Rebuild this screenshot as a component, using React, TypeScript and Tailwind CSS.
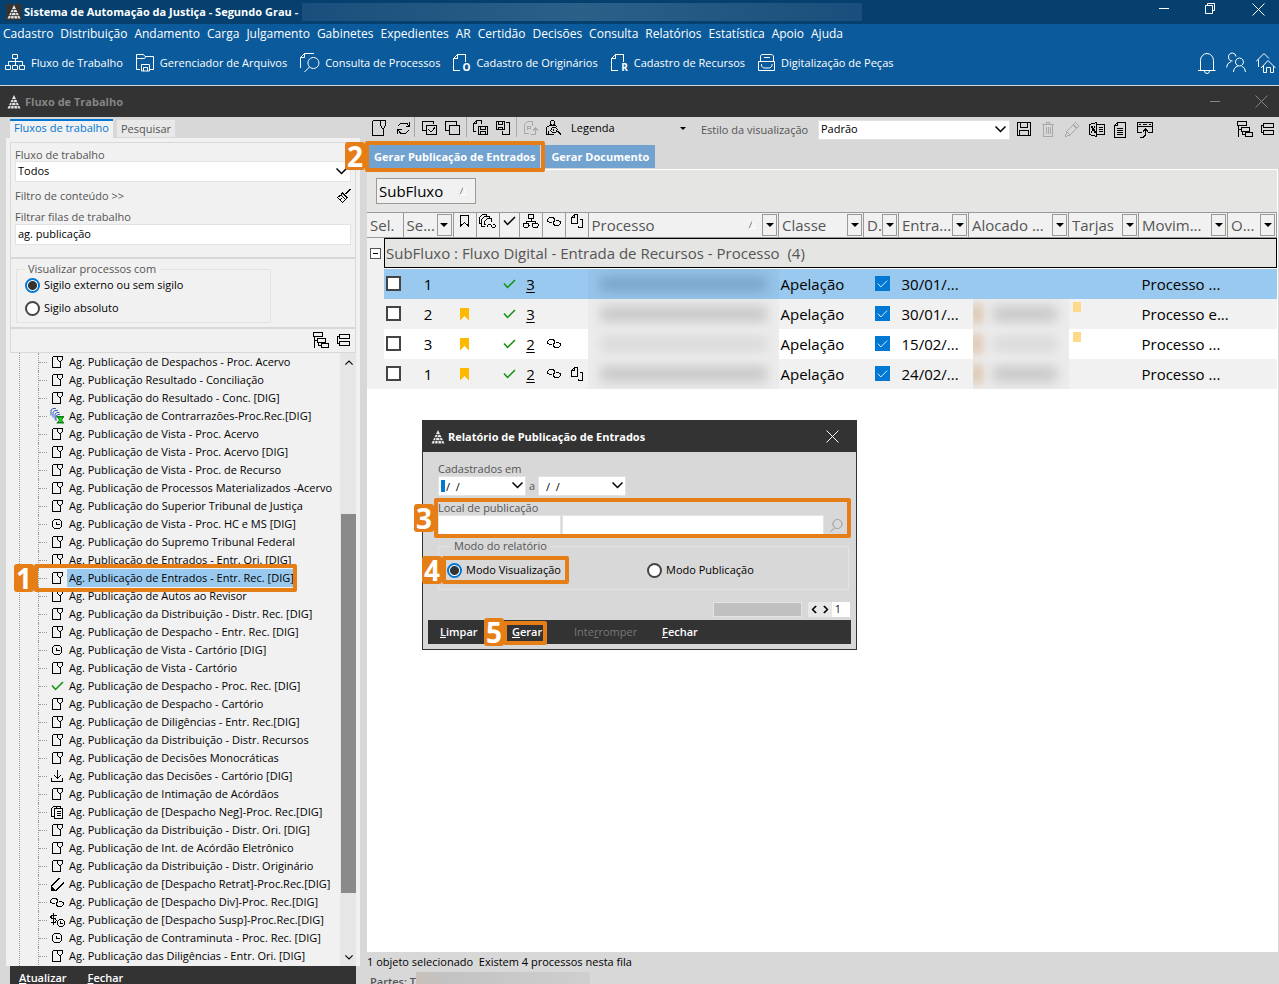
import { useState, type ReactNode } from 'react'
import clsx from 'clsx'

const ICONS = {
  file: { w: 11, h: 12, d: 'M.5.5H10.5V3.5L8.5 5.5V11.5H.5V.5M5.5.5V3.5L7.5 5.5 8.5 5.5' },
  fileLg: { w: 14, h: 16, d: 'M.5.5H13.5V5.5L11.5 8.5V15.5H.5V.5M8.5.5V5.5L10.5 8.5H11.5' },
  clock: { w: 12, h: 12, d: 'M3.5 1.5H8.5L10.5 3.5V8.5L8.5 10.5H3.5L1.5 8.5V3.5ZM5.5 3.5V6.5H8.5' },
  check: { w: 13, h: 10, d: 'M1 4.5L4.5 8.5 12 1' },
  download: { w: 12, h: 12, d: 'M6.5 0V7.5M3 5L6.5 8.5 10 5M.5 7.5V11.5H11.5V7.5' },
  notes: { w: 12, h: 14, d: 'M3.5 3.5H11.5V13.5H3.5ZM5.5 6.5H9.5M5.5 8.5H9.5M5.5 10.5H9.5M5.5 3V1.5H9.5V3M3 11.5H.5V3.5L2.5 1.5H5' },
  pencil: { w: 15, h: 15, d: 'M9.5 1L1.5 9V13.5H6L14 5.5M1.5 10L5 13.5M2 11V13H4Z' },
  link: { w: 14, h: 9, d: 'M5 5.5H2.5L.5 4V2.5L2.5.5H6L7.5 2V3.5L6 4.5M9 3.5H11.5L13.5 5V6.5L11.5 8.5H8L6.5 7V5.5L8 4' },
  dollar: { w: 15, h: 15, d: 'M6.5 2.5H2L.5 4 2 5.5H5L6.5 7.5 5 9.5H.5M3.5 0V12M9.5 6.5H12.5L14.5 8.5V11.5L12.5 13.5H9.5L7.5 11.5V8.5ZM10.5 8V10.5H13' },
  pages: { w: 12, h: 14, d: 'M3.5 0.5H6.5V9.5H.5V3.5ZM3.5.5V3.5H.5M8.5 5.5H11.5V13.5H7.5V11.5' },
  bookmark: { w: 9, h: 12, d: 'M.5.5H8.5V11L4.5 7.5.5 11Z' },
  refresh: { w: 13, h: 14, d: 'M12.5 1V5.5H8.5M12 5L9.5 2H4L1 5M.5 13V8.5H4.5M1 9L3.5 12H9L12 9' },
  checks: { w: 15, h: 15, d: 'M3.5 9.5H.5V.5H11.5V3M4.5 4.5H14.5V13.5H4.5ZM6.5 8.5L9 11 13 6.5' },
  copies: { w: 15, h: 15, d: 'M3.5 9.5H.5V.5H11.5V3.5M4.5 4.5H14.5V13.5H4.5Z' },
  fileSave: { w: 15, h: 16, d: 'M3 11.5H.5V3.5L3.5.5H8.5V4M3.5.5V3.5H.5M5.5 6.5H14.5V14.5H5.5ZM7.5 6.5V9.5H12.5V6.5M7.5 14.5V11.5H12.5V14.5' },
  saveFile: { w: 15, h: 15, d: 'M.5.5H8.5V8.5H.5ZM2.5.5V3.5H6.5V.5M2.5 8.5V6.5H6.5V8.5M10 1.5H13.5V13.5H6.5V10' },
  exportPdf: { w: 14, h: 15, d: 'M5 12.5H.5V3.5L3.5.5H8.5V5M3.5 9V5.5H6V7.5H4M11.5 13V7M9 9.5L11.5 7 14 9.5M7 13.5H11.5' },
  inspect: { w: 16, h: 16, d: 'M2 14.5H.5V7.5L3.5 5.5H5M8 5.5H9.5L11 7M5.5.5H7.5L8.5 1.5V3.5L7.5 5.5H5.5L4.5 3.5V1.5ZM2.5 11V14.5H8M6.5 7.5H9.5L11.5 9.5 9.5 12.5H6.5L4.5 10.5ZM11 11L15 15M12 11L15.5 14.5M7.5 9V11' },
  disk: { w: 15, h: 15, d: 'M.5.5H13.5V13.5H.5ZM3.5.5V5.5H10.5V.5M2.5 13.5V8.5H11.5V13.5' },
  trash: { w: 13, h: 15, d: 'M0 2.5H12M4.5 2V.5H7.5V2M1.5 3V14.5H10.5V3M4.5 5V12M6.5 5V12M8.5 5V12' },
  pencilThin: { w: 15, h: 15, d: 'M1.5 9.5L10.5.5 14 4 5 13 .5 14.5ZM8.5 3L12 6.5M1.5 9.5L5 13' },
  excel: { w: 16, h: 15, d: 'M7.5.5L.5 2.5V12.5L7.5 14.5ZM7.5 2.5H15.5V12.5H7.5M2 4.5L6 10.5M6 4.5L2 10.5M3 4.5L7 10.5M10 5.5H14M10 7.5H14M10 9.5H14' },
  text: { w: 13, h: 16, d: 'M3.5.5H11.5V15.5H.5V3.5ZM3.5.5V3.5H.5M3 6.5H9M3 8.5H9M3 10.5H9M3 12.5H9' },
  window: { w: 16, h: 16, d: 'M5 10.5H.5V.5H15.5V10.5H11M.5 4.5H15.5M2 2.5H4M6 2.5H10M12 2.5H14M3 15.5H6L8.5 13V7M6 9.5L8.5 7 11 9.5' },
  tree: { w: 16, h: 17, d: 'M.5.5H9.5V4.5H.5ZM4.5 6.5H12.5V10.5H4.5ZM8.5 11.5H15.5V15.5H8.5ZM1.5 5V16M2 8.5H4M5.5 11V13.5H8' },
  collapse: { w: 14, h: 13, d: 'M2.5.5H12.5V4.5H2.5ZM2.5 7.5H12.5V11.5H2.5ZM2 2.5H.5V9.5H2' },
  org: { w: 16, h: 14, d: 'M5.5.5H10.5V4.5H5.5ZM8 5V7.5M3 9V7.5H12V9M.5 9.5H5.5L6 11.5 5 13H1L.5 11ZM9 9.5H14.5L15.5 11 14.5 13H10L9 11.5Z' },
  copyLink: { w: 17, h: 15, d: 'M3 9.5H.5V3.5L3.5.5H7.5V2M6 12.5H2.5V5.5L5.5 2.5H10.5V4M7 10.5H5.5V7.5L8.5 4.5H12.5V8M9.5 13.5L8.5 12.5V11.5L9.5 10.5H11.5L13.5 13.5H15.5L16.5 12.5V11.5L15.5 10.5H14' },
  search: { w: 13, h: 13, d: 'M7.5.5A4.5 4.5 0 1 1 7.4.5ZM4.5 9L.5 12.5' },
  brush: { w: 14, h: 14, d: 'M13.5.5L8.5 5.5M12.5.5L7.5 5.5M5.5 4L10 8.5 8.5 10.5 4 6ZM4 6L.5 8.5 5.5 13.5 8.5 10.5M3 11L5 9' },
  chevron: { w: 11, h: 7, d: 'M.5.5L5.5 5.5 10.5.5' },
  network: { w: 21, h: 17, d: 'M7.5.5H12.5V4.5H7.5ZM10.5 5V11M3.5 11V7.5H17.5V11M.5 11.5H5.5V15.5H.5ZM7.5 11.5H12.5V15.5H7.5ZM14.5 11.5H19.5V15.5H14.5Z' },
  folder: { w: 19, h: 18, d: 'M4 15.5H.5V.5H7.5L9 2.5H17.5V15.5H14M.5 4.5H8.5L10 2.5M5.5 17V10.5H13.5V17ZM7.5 17V13.5H11.5V17' },
  fileSearch: { w: 20, h: 20, d: 'M.5 15V4.5L4.5.5H14M4.5.5V4.5H.5M13.5 4.5A5.5 5.5 0 1 1 13.4 4.5ZM9.5 14L4.5 19' },
  fileLetter: { w: 16, h: 18, d: 'M7 16.5H.5V4.5L4.5.5H12.5V8M4.5.5V4.5H.5' },
  scanner: { w: 18, h: 18, d: 'M2.5 7V2L3.5.5H14L15.5 2V7M6 3.5H12M.5 7.5H16.5V16.5H.5ZM3.5 10V12L5.5 14H12L14 12V10' },
  bell: { w: 18, h: 22, d: 'M0 18.5H17.5M2.5 18V8.5A6.5 7 0 0 1 15.5 8.5V18M6.5 19A2.5 2.5 0 0 0 11.5 19' },
  users: { w: 20, h: 21, d: 'M6.5 1A4 4 0 1 0 6.6 9M6.5 1A4 4 0 0 1 10 4.5M.5 15.5A7 7 0 0 1 5 9.5M13.5 6A4 4 0 1 1 13.4 6ZM7.5 20A6.5 6.5 0 0 1 12 14M15.5 14A6.5 6.5 0 0 1 19.5 20' },
  home: { w: 20, h: 20, d: 'M0 8.5L8 .5 13 5.5M2.5 6.5V14M5 15L12 7.5 19.5 15M7.5 13V19.5H10.5V14.5H14.5V19.5H17.5V13' },
} as const

type IconName = keyof typeof ICONS

function Icon({ name, className, fill = 'none' }: { name: IconName; className?: string; fill?: string }) {
  const { w, h, d } = ICONS[name]
  const smooth = name === 'chevron' || name === 'search' || name === 'check' || w > 17
  return (
    <svg
      width={w}
      height={h}
      viewBox={`0 0 ${w} ${h}`}
      fill={fill}
      stroke="currentColor"
      shapeRendering={smooth ? 'auto' : 'crispEdges'}
      className={clsx('shrink-0', className)}
      aria-hidden="true"
    >
      <path d={d} />
    </svg>
  )
}

function Logo() {
  return (
    <svg width="14" height="14" viewBox="0 0 14 14" className="shrink-0" aria-hidden="true">
      <path d="M7 0L13.500 13.500H.5Z" fill="#e8e8e8" />
      <path d="M3 4.500H11M2 7.500H12M1 10.500H13M7 4.500L6 7.500M5 7.500L4.500 10.500M8.500 7.500L9 10.500M4 10.500L3.500 14M7 10.500V14M10 10.500L11 14" stroke="#333" strokeWidth=".8" />
    </svg>
  )
}

function ColorPages() {
  return (
    <svg width="15" height="16" viewBox="0 0 15 16" className="shrink-0" aria-hidden="true">
      <path d="M1 7.500V2L3 .5H6M3 9.500V4L5 2.500H8M5 11.500V6L7 4.500H9.500M6 13V8L8 6.500H10" fill="none" stroke="#3b5fc0" />
      <path d="M6.500 8.500H14M6.500 15H14" stroke="#107c10" />
      <path d="M7.500 9H13.500L11.500 12 13.500 14.500H7.500L9.500 12Z" fill="#22d422" stroke="#107c10" />
    </svg>
  )
}

function Close({ className }: { className?: string }) {
  return (
    <svg width="13" height="13" viewBox="0 0 13 13" stroke="currentColor" className={className} aria-hidden="true">
      <path d="M.5.5L12.500 12.500M12.500.5L.5 12.500" />
    </svg>
  )
}

function Step({ n, className }: { n: number; className: string }) {
  return (
    <span
      className={clsx(
        'absolute z-20 flex h-7 w-5 items-center justify-center rounded-[3px] bg-[#e67e17] text-[28px] leading-none font-bold text-white',
        className,
      )}
    >
      {n}
    </span>
  )
}

function Frame({ className }: { className: string }) {
  return <span className={clsx('pointer-events-none absolute z-10 rounded-[2px] border-4 border-[#e67e17]', className)} />
}

const MENUS = ['Cadastro', 'Distribuição', 'Andamento', 'Carga', 'Julgamento', 'Gabinetes', 'Expedientes', 'AR', 'Certidão', 'Decisões', 'Consulta', 'Relatórios', 'Estatística', 'Apoio', 'Ajuda']

const SHORTCUTS: { icon: IconName; label: string; letter?: string }[] = [
  { icon: 'network', label: 'Fluxo de Trabalho' },
  { icon: 'folder', label: 'Gerenciador de Arquivos' },
  { icon: 'fileSearch', label: 'Consulta de Processos' },
  { icon: 'fileLetter', label: 'Cadastro de Originários', letter: 'O' },
  { icon: 'fileLetter', label: 'Cadastro de Recursos', letter: 'R' },
  { icon: 'scanner', label: 'Digitalização de Peças' },
]

function AppHeader() {
  return (
    <header className="shrink-0 border-b border-[#d0d8e0] bg-[#0b5b9c] text-white">
      <div className="flex h-6 items-center bg-[#05406f] pl-[6px]">
        <span className="flex size-4 items-center justify-center bg-[#333]">
          <Logo />
        </span>
        <h1 className="ml-[2px] font-bold whitespace-nowrap">Sistema de Automação da Justiça - Segundo Grau -</h1>
        <div className="ml-1 h-[18px] w-[44%] bg-linear-to-r from-[#1a4f7d] via-[#2b6089] to-[#1a4f7d]" />
        <div className="ml-auto flex items-center gap-9 self-start pr-[14px]">
          <button aria-label="Minimizar" className="flex h-4 w-[10px] items-center">
            <span className="h-px w-full bg-white" />
          </button>
          <button aria-label="Restaurar">
            <svg width="11" height="11" viewBox="0 0 11 11" fill="none" stroke="currentColor">
              <path d="M.5 2.500H7.500V10.500H.5ZM2.500 2V.5H9.500V7.500H8" />
            </svg>
          </button>
          <button aria-label="Fechar sistema" className="pt-[3px]">
            <Close />
          </button>
        </div>
      </div>
      <nav className="flex h-5 items-center gap-[7px] pl-[3px] text-[12px]">
        {MENUS.map((menu) => (
          <a key={menu} href="#" className="whitespace-nowrap">
            {menu}
          </a>
        ))}
      </nav>
      <div className="flex h-[41px] items-center gap-[13px] pb-1 pl-[5px]">
        {SHORTCUTS.map(({ icon, label, letter }) => (
          <button key={label} className="flex h-6 items-center gap-[5px] whitespace-nowrap">
            <span className={clsx('relative', letter && 'mr-[2px]')}>
              <Icon name={icon} />
              {letter && <b className="absolute -right-px bottom-0 text-[10px] leading-[9px]">{letter}</b>}
            </span>
            {label}
          </button>
        ))}
        <div className="ml-auto flex items-center gap-[10px] pr-[3px]">
          <button aria-label="Notificações"><Icon name="bell" /></button>
          <button aria-label="Usuários"><Icon name="users" /></button>
          <button aria-label="Início"><Icon name="home" /></button>
        </div>
      </div>
    </header>
  )
}

const QUEUES: [string, (IconName | 'color')?][] = [
  ['Ag. Publicação de Despachos - Proc. Acervo'],
  ['Ag. Publicação Resultado - Conciliação'],
  ['Ag. Publicação do Resultado - Conc. [DIG]'],
  ['Ag. Publicação de Contrarrazões-Proc.Rec.[DIG]', 'color'],
  ['Ag. Publicação de Vista - Proc. Acervo'],
  ['Ag. Publicação de Vista - Proc. Acervo [DIG]'],
  ['Ag. Publicação de Vista - Proc. de Recurso'],
  ['Ag. Publicação de Processos Materializados -Acervo'],
  ['Ag. Publicação do Superior Tribunal de Justiça'],
  ['Ag. Publicação de Vista - Proc. HC e MS [DIG]', 'clock'],
  ['Ag. Publicação do Supremo Tribunal Federal'],
  ['Ag. Publicação de Entrados - Entr. Ori. [DIG]'],
  ['Ag. Publicação de Entrados - Entr. Rec. [DIG]'],
  ['Ag. Publicação de Autos ao Revisor'],
  ['Ag. Publicação da Distribuição - Distr. Rec. [DIG]'],
  ['Ag. Publicação de Despacho - Entr. Rec. [DIG]'],
  ['Ag. Publicação de Vista - Cartório [DIG]', 'clock'],
  ['Ag. Publicação de Vista - Cartório'],
  ['Ag. Publicação de Despacho - Proc. Rec. [DIG]', 'check'],
  ['Ag. Publicação de Despacho - Cartório'],
  ['Ag. Publicação de Diligências - Entr. Rec.[DIG]'],
  ['Ag. Publicação da Distribuição - Distr. Recursos'],
  ['Ag. Publicação de Decisões Monocráticas'],
  ['Ag. Publicação das Decisões - Cartório [DIG]', 'download'],
  ['Ag. Publicação de Intimação de Acórdãos'],
  ['Ag. Publicação de [Despacho Neg]-Proc. Rec.[DIG]', 'notes'],
  ['Ag. Publicação da Distribuição - Distr. Ori. [DIG]'],
  ['Ag. Publicação de Int. de Acórdão Eletrônico'],
  ['Ag. Publicação da Distribuição - Distr. Originário'],
  ['Ag. Publicação de [Despacho Retrat]-Proc.Rec.[DIG]', 'pencil'],
  ['Ag. Publicação de [Despacho Div]-Proc. Rec.[DIG]', 'link'],
  ['Ag. Publicação de [Despacho Susp]-Proc.Rec.[DIG]', 'dollar'],
  ['Ag. Publicação de Contraminuta - Proc. Rec. [DIG]', 'clock'],
  ['Ag. Publicação das Diligências - Entr. Ori. [DIG]'],
]

function Radio({ name, label, checked, onChange }: { name: string; label: string; checked: boolean; onChange: () => void }) {
  return (
    <label className="flex items-center gap-1 whitespace-nowrap text-black">
      <input
        type="radio"
        name={name}
        checked={checked}
        onChange={onChange}
        className="size-[15px] shrink-0 appearance-none rounded-full border-2 border-[#444] bg-white checked:border-[#0078d4] checked:bg-[radial-gradient(circle,#333_4px,#fff_5px)]"
      />
      {label}
    </label>
  )
}

function QueueTree() {
  const [selected, setSelected] = useState(12)
  return (
    <div className="flex min-h-0 flex-1 pl-[9px]">
      <ul className="min-w-0 flex-1 overflow-visible border-l border-dotted border-[#999] pl-[18px] whitespace-nowrap">
        {QUEUES.map(([label, icon = 'file'], i) => (
          <li key={label} className="relative flex h-[18px] items-center border-l border-dotted border-[#999] text-black">
            <span className="w-2 border-t border-dotted border-[#999]" />
            <span className="flex w-5 shrink-0 items-center justify-center">
              {icon === 'color' ? (
                <ColorPages />
              ) : (
                <Icon name={icon} className={icon === 'check' ? 'stroke-[1.5] text-[#0a930a]' : ''} />
              )}
            </span>
            <button
              onClick={() => setSelected(i)}
              className={clsx('h-[18px] px-[2px]', i === selected && 'bg-[#99c9ef]')}
            >
              {label}
            </button>
            {i === 12 && (
              <>
                <Step n={1} className="-top-[5px] -left-[25px]" />
                <Frame className="-top-[5px] -left-[5px] h-7 w-[263px]" />
              </>
            )}
          </li>
        ))}
      </ul>
      <div className="flex w-4 flex-col bg-[#e6e6e6] pl-px text-black">
        <button aria-label="Rolar para cima" className="flex h-[18px] items-center justify-center">
          <Icon name="chevron" className="w-2 rotate-180 stroke-[1.5]" />
        </button>
        <span className="grow-[143]" />
        <span className="grow-[379] bg-[#8a8a8a]" />
        <span className="grow-[55]" />
        <button aria-label="Rolar para baixo" className="flex h-[18px] items-center justify-center">
          <Icon name="chevron" className="w-2 stroke-[1.5]" />
        </button>
      </div>
    </div>
  )
}

function Sidebar() {
  const [secrecy, setSecrecy] = useState('externo')
  return (
    <aside className="flex w-[366px] shrink-0 flex-col pt-[2px] pr-[6px] pl-[6px] text-[#555]">
      <div role="tablist" className="flex h-[19px] items-center gap-1 pl-1">
        <button role="tab" aria-selected="true" className="h-full border-t-2 border-[#0078d4] bg-[#f1f1f1] px-1 pb-[3px] leading-[14px] whitespace-nowrap text-[#0078d4]">
          Fluxos de trabalho
        </button>
        <button role="tab" aria-selected="false" className="h-[17px] bg-[#e8e8e8] px-1 leading-[17px]">
          Pesquisar
        </button>
      </div>
      <div className="flex min-h-0 flex-1 flex-col bg-[#f1f1f1] px-1 pt-1">
        <div className="h-[117px] border border-b-2 border-[#d8d8d8] px-1 pt-[5px]">
          <label htmlFor="flow" className="block h-[13px] leading-[14px]">
            Fluxo de trabalho
          </label>
          <div className="relative">
            <select id="flow" className="h-[21px] w-full appearance-none border border-[#e3e3e3] bg-white px-[2px] pb-[2px] text-black">
              <option>Todos</option>
            </select>
            <Icon name="chevron" className="pointer-events-none absolute top-[7px] right-1 stroke-[1.5] text-black" />
          </div>
          <div className="flex h-7 items-center justify-between">
            <button>Filtro de conteúdo &gt;&gt;</button>
            <button aria-label="Limpar filtros" className="text-black">
              <Icon name="brush" />
            </button>
          </div>
          <label htmlFor="filter" className="block h-[14px] leading-[14px]">
            Filtrar filas de trabalho
          </label>
          <input id="filter" defaultValue="ag. publicação" className="h-[21px] w-full border border-[#e3e3e3] bg-white px-[2px] pb-[2px] text-black" />
        </div>
        <div className="h-[70px] border-x border-b-2 border-[#d8d8d8] px-[5px] pt-[2px]">
          <fieldset className="flex h-[62px] w-[255px] flex-col gap-[7px] border border-[#e3e3e3] pl-2">
            <legend className="px-[3px] leading-4">Visualizar processos com</legend>
            <Radio name="secrecy" label="Sigilo externo ou sem sigilo" checked={secrecy === 'externo'} onChange={() => setSecrecy('externo')} />
            <Radio name="secrecy" label="Sigilo absoluto" checked={secrecy === 'absoluto'} onChange={() => setSecrecy('absoluto')} />
          </fieldset>
        </div>
        <div className="flex h-6 items-center justify-end gap-2 border-x border-b border-[#d8d8d8] pr-1 text-black">
          <button aria-label="Expandir árvore"><Icon name="tree" /></button>
          <button aria-label="Recolher árvore"><Icon name="collapse" /></button>
        </div>
        <QueueTree />
      </div>
      <div className="mx-1 flex h-[18px] gap-[21px] bg-[#333] pl-[9px] leading-6 font-semibold text-white">
        <button className="h-6"><u>A</u>tualizar</button>
        <button className="h-6"><u>F</u>echar</button>
      </div>
    </aside>
  )
}

function ToolButton({ icon, label, className }: { icon: IconName; label: string; className?: string }) {
  return (
    <button aria-label={label} title={label} className={clsx('flex h-[22px] w-[23px] shrink-0 items-center justify-center', className)}>
      <Icon name={icon} />
    </button>
  )
}

const Divider = () => <span className="h-5 w-px shrink-0 bg-[#a8a8a8]" />

function Toolbar() {
  return (
    <div className="flex h-[25px] items-center text-black">
      <div className="flex shrink-0 self-start">
        <div className="flex w-[47px]">
          <ToolButton icon="fileLg" label="Abrir pasta" className="w-5" />
          <ToolButton icon="refresh" label="Atualizar fila" className="w-[26px]" />
        </div>
        <Divider />
        <div className="flex w-[51px] justify-center">
          <ToolButton icon="checks" label="Selecionar todos" />
          <ToolButton icon="copies" label="Desmarcar todos" />
        </div>
        <Divider />
        <div className="flex w-[49px] justify-center">
          <ToolButton icon="fileSave" label="Salvar documento" />
          <ToolButton icon="saveFile" label="Salvar como" />
        </div>
        <Divider />
        <div className="flex w-[53px] pl-[2px]">
          <ToolButton icon="exportPdf" label="Exportar PDF" className="text-[#a8a8a8]" />
          <ToolButton icon="inspect" label="Localizar" />
        </div>
        <button className="flex h-[22px] w-[131px] items-center justify-between pl-px">
          Legenda
          <span className="mr-[15px] border-x-[3px] border-t-[3px] border-x-transparent border-t-black" />
        </button>
      </div>
      <label htmlFor="style" className="w-[117px] shrink-0 whitespace-nowrap text-[#555]">
        Estilo da visualização
      </label>
      <div className="relative w-[192px] shrink-0">
        <select id="style" className="h-5 w-full appearance-none border border-[#e3e3e3] bg-white px-[2px] pb-[2px]">
          <option>Padrão</option>
        </select>
        <Icon name="chevron" className="pointer-events-none absolute top-[6px] right-1 stroke-[1.5]" />
      </div>
      <div className="flex gap-px pl-[3px]">
        <ToolButton icon="disk" label="Salvar estilo" />
        <ToolButton icon="trash" label="Excluir estilo" className="text-[#a8a8a8]" />
        <ToolButton icon="pencilThin" label="Editar estilo" className="text-[#a8a8a8]" />
        <ToolButton icon="excel" label="Exportar Excel" />
        <ToolButton icon="text" label="Exportar texto" />
        <ToolButton icon="window" label="Abrir em janela" />
      </div>
      <div className="ml-auto flex">
        <ToolButton icon="tree" label="Expandir grupos" />
        <ToolButton icon="collapse" label="Recolher grupos" />
      </div>
    </div>
  )
}

const COLUMNS: { label: ReactNode; filter?: boolean; span?: number; sorted?: boolean }[] = [
  { label: 'Sel.', span: 2 },
  { label: 'Se...', filter: true },
  { label: <Icon name="bookmark" /> },
  { label: <Icon name="copyLink" /> },
  { label: <Icon name="check" className="stroke-[1.5]" /> },
  { label: <Icon name="org" /> },
  { label: <Icon name="link" /> },
  { label: <Icon name="pages" /> },
  { label: 'Processo', filter: true, sorted: true },
  { label: 'Classe', filter: true },
  { label: 'D.', filter: true },
  { label: 'Entra...', filter: true },
  { label: 'Alocado ...', filter: true },
  { label: 'Tarjas', filter: true },
  { label: 'Movim...', filter: true },
  { label: 'O...', filter: true },
]

const ROWS = [
  { seq: 1, mark: false, count: 3, link: false, pages: false, date: '30/01/...', tag: false, move: 'Processo ...' },
  { seq: 2, mark: true, count: 3, link: false, pages: false, date: '30/01/...', tag: true, move: 'Processo e...' },
  { seq: 3, mark: true, count: 2, link: true, pages: false, date: '15/02/...', tag: true, move: 'Processo ...' },
  { seq: 1, mark: true, count: 2, link: true, pages: true, date: '24/02/...', tag: false, move: 'Processo ...' },
]

function SortMark() {
  return (
    <svg width="8" height="8" viewBox="0 0 8 8" className="shrink-0" aria-hidden="true">
      <path d="M1 7.500L4 .5" stroke="#888" />
      <path d="M4.500.5L7.500 7.500H1" fill="none" stroke="#fff" />
    </svg>
  )
}

// Hidden personal data: a soft bar over a flat ground
function Redacted({ row, owner }: { row: number; owner?: boolean }) {
  return (
    <div
      className={clsx(
        'flex h-[30px] items-center overflow-hidden',
        owner && 'ml-1',
        row === 0 ? 'bg-[#97c4ea]' : 'bg-[#ececec]',
      )}
    >
      {owner && <span className="h-5 w-2 shrink-0 bg-[#d8b999] blur-[5px]" />}
      <span
        className={clsx(
          'mx-3 h-4 flex-1 blur-[6px]',
          row === 0 ? 'bg-[#7ba6cc]' : row === 2 ? 'bg-[#dadada]' : 'bg-[#c9c9c9]',
        )}
      />
    </div>
  )
}

function ProcessTable() {
  return (
    <table className="w-full table-fixed border-collapse text-[15px]">
      <colgroup>
        <col className="w-[17px]" />
        <col className="w-[19px]" />
        <col className="w-[50px]" />
        <col className="w-[23px]" />
        <col className="w-[23px]" />
        <col className="w-5" />
        <col className="w-[23px]" />
        <col className="w-[23px]" />
        <col className="w-[23px]" />
        <col />
        <col className="w-[85px]" />
        <col className="w-[35px]" />
        <col className="w-[70px]" />
        <col className="w-[100px]" />
        <col className="w-[70px]" />
        <col className="w-[89px]" />
        <col className="w-[49px]" />
      </colgroup>
      <thead>
        <tr className="h-[25px] border-y border-[#999] bg-[#f1f1f1] text-[#555]">
          {COLUMNS.map(({ label, filter, span, sorted }, i) => (
            <th key={i} colSpan={span} className="border-r border-[#999] p-0 text-left font-normal">
              <div className="flex h-6 items-center">
                {typeof label === 'string' ? (
                  <span className="min-w-0 flex-1 pl-[3px] leading-6 whitespace-nowrap">{label}</span>
                ) : (
                  <span className="flex flex-1 justify-center pb-2 text-black">{label}</span>
                )}
                {sorted && <SortMark />}
                {filter && (
                  <button
                    aria-label={`Filtrar ${label}`}
                    className={clsx('mr-px flex h-[22px] w-[15px] shrink-0 items-center justify-center border border-[#999]', sorted && 'ml-[6px]')}
                  >
                    <span className="border-x-[4px] border-t-[4px] border-x-transparent border-t-black" />
                  </button>
                )}
              </div>
            </th>
          ))}
        </tr>
      </thead>
      <tbody className="text-black">
        <tr className="h-[31px] text-[#555]">
          <td className="bg-[#f1f1f1] p-0">
            <button aria-label="Recolher grupo" className="ml-[3px] flex size-[11px] items-center justify-center border border-[#555] bg-white">
              <span className="h-px w-[5px] bg-black" />
            </button>
          </td>
          <td colSpan={16} className="p-0">
            <div className="h-[30px] border border-black bg-[#e5e5e3] pl-px leading-7 whitespace-pre">
              {'SubFluxo : Fluxo Digital - Entrada de Recursos - Processo  (4)'}
            </div>
          </td>
        </tr>
        {ROWS.map((row, i) => (
          <tr key={i} className={clsx('h-[30px]', i === 0 ? 'bg-[#99c9ef]' : i % 2 ? 'bg-[#f1f1f1]' : 'bg-white')}>
            <td className="bg-[#f1f1f1] p-0" />
            <td className="p-0">
              <input
                type="checkbox"
                aria-label={`Selecionar processo ${i + 1}`}
                className="ml-[2px] block size-[15px] appearance-none border-2 border-[#444] bg-white checked:bg-[#0078d4]"
              />
            </td>
            <td className="p-0 text-center">{row.seq}</td>
            <td className="p-0">{row.mark && <Icon name="bookmark" fill="currentColor" className="mx-auto text-[#ffb900]" />}</td>
            <td className="p-0" />
            <td className="p-0">
              <Icon name="check" className="mx-auto stroke-[1.5] text-[#0a930a]" />
            </td>
            <td className="p-0 text-center">
              <a href="#" className="underline underline-offset-2">
                {row.count}
              </a>
            </td>
            <td className="p-0">{row.link && <Icon name="link" className="mx-auto" />}</td>
            <td className="p-0">{row.pages && <Icon name="pages" className="mx-auto" />}</td>
            <td className="p-0">
              <Redacted row={i} />
            </td>
            <td className="p-0 pl-[2px]">Apelação</td>
            <td className="p-0">
              <label className="ml-[11px] flex size-[15px] items-center justify-center bg-[#0078d4] text-white">
                <input type="checkbox" defaultChecked aria-label={`Digital ${i + 1}`} className="sr-only" />
                <Icon name="check" className="w-[11px]" />
              </label>
            </td>
            <td className="p-0 pl-[3px]">{row.date}</td>
            <td className="p-0">{i > 0 && <Redacted row={i} owner />}</td>
            <td className="p-0 align-top">{row.tag && <span className="mt-[3px] ml-1 block h-[10px] w-2 bg-[#ffd98a]" />}</td>
            <td className="p-0 pl-[3px] whitespace-nowrap">{row.move}</td>
            <td className="p-0" />
          </tr>
        ))}
      </tbody>
    </table>
  )
}

function DateField({ label, active }: { label: string; active?: boolean }) {
  return (
    <div className="relative">
      <input aria-label={label} defaultValue="/  /" className="h-5 w-[88px] border border-[#e3e3e3] bg-white pl-[7px] text-black" />
      {active && <span className="absolute top-1 left-[3px] h-3 w-1 bg-[#0078d4]" />}
      <button aria-label={`Abrir calendário: ${label}`} className="absolute top-[6px] right-[3px] text-black">
        <Icon name="chevron" className="stroke-[1.5]" />
      </button>
    </div>
  )
}

function ReportDialog() {
  const [mode, setMode] = useState('view')
  return (
    <section role="dialog" aria-labelledby="report-title" className="absolute top-[303px] left-14 w-[435px] border border-[#333] bg-[#d8d8d8] text-[#555]">
      <div className="flex h-[31px] items-center bg-[#333] pr-[17px] pl-2 text-white">
        <Logo />
        <h2 id="report-title" className="ml-[3px] font-bold">
          Relatório de Publicação de Entrados
        </h2>
        <button aria-label="Fechar relatório" className="ml-auto">
          <Close />
        </button>
      </div>
      <div className="px-[5px] pt-[10px] pb-[5px]">
        <p className="h-[14px] pl-[10px] leading-[14px]">Cadastrados em</p>
        <div className="flex items-center gap-[3px] pl-[10px]">
          <DateField label="Data inicial" active />
          <span className="w-[6px]">a</span>
          <DateField label="Data final" />
        </div>
        <div className="relative mt-[5px] pl-[10px]">
          <label htmlFor="place" className="block h-[14px] leading-[14px]">
            Local de publicação
          </label>
          <div className="flex items-center">
            <input id="place" className="h-5 w-[123px] border border-[#e3e3e3] bg-white" />
            <input aria-label="Descrição do local" className="ml-px h-5 w-[262px] border border-[#e3e3e3] bg-white" />
            <button aria-label="Pesquisar local" className="ml-[6px] text-[#999]">
              <Icon name="search" />
            </button>
          </div>
          <Step n={3} className="top-[3px] -left-[14px]" />
          <Frame className="-top-[3px] left-[6px] h-10 w-[417px]" />
        </div>
        <fieldset className="mt-[3px] mr-[2px] ml-[10px] h-[52px] border border-[#e3e3e3]">
          <legend className="ml-3 h-4 px-[3px] leading-4">Modo do relatório</legend>
          <div className="relative flex pt-2 pl-2">
            <div className="w-[200px]">
              <Radio name="mode" label="Modo Visualização" checked={mode === 'view'} onChange={() => setMode('view')} />
            </div>
            <Radio name="mode" label="Modo Publicação" checked={mode === 'publish'} onChange={() => setMode('publish')} />
            <Step n={4} className="top-[2px] -left-[17px]" />
            <Frame className="top-[2px] left-[3px] h-7 w-[127px]" />
          </div>
        </fieldset>
        <div className="mt-[11px] mb-[3px] flex h-4 items-center justify-end pr-px text-black">
          <span className="h-[15px] w-[89px] border border-[#e3e3e3] bg-[#c0c0c0]" />
          <button aria-label="Página anterior" className="ml-[6px] flex h-[15px] w-3 items-center justify-center bg-[#e8e8e8]">
            <Icon name="chevron" className="w-2 rotate-90 stroke-2" />
          </button>
          <button aria-label="Próxima página" className="flex h-[15px] w-3 items-center justify-center bg-[#e8e8e8]">
            <Icon name="chevron" className="w-2 -rotate-90 stroke-2" />
          </button>
          <input aria-label="Página" defaultValue="1" className="h-[15px] w-[18px] bg-white pl-[3px] text-[10px]" />
        </div>
        <div className="relative flex h-6 items-center bg-[#333] font-semibold text-white">
          <button className="w-[71px] pl-3 text-left"><u>L</u>impar</button>
          <div className="relative w-[75px] pl-[13px]">
            <button><u>G</u>erar</button>
            <Step n={5} className="-top-[6px] -left-[15px]" />
            <Frame className="-top-[3px] left-1 h-6 w-[44px]" />
          </div>
          <button className="w-[88px] text-left font-normal text-[#777]">Inte<u>r</u>romper</button>
          <button><u>F</u>echar</button>
        </div>
      </div>
    </section>
  )
}

export default function App() {
  return (
    <div className="flex h-screen flex-col overflow-hidden bg-[#d8d8d8] font-['Open_Sans','Noto_Sans',sans-serif] text-[11px] leading-4">
      <AppHeader />
      <div className="flex h-[31px] shrink-0 items-center bg-[#333] pr-[11px] pl-[7px] text-[#858585]">
        <Logo />
        <h2 className="ml-1 font-bold">Fluxo de Trabalho</h2>
        <div className="ml-auto flex items-center gap-[35px]">
          <button aria-label="Minimizar janela" className="flex h-4 w-[10px] items-center">
            <span className="h-px w-full bg-[#858585]" />
          </button>
          <button aria-label="Fechar janela">
            <Close />
          </button>
        </div>
      </div>
      <div className="flex min-h-0 flex-1">
        <Sidebar />
        <main className="relative flex min-w-0 flex-1 flex-col pl-px">
          <Toolbar />
          <div className="relative flex h-[27px] items-start gap-[5px] pt-[3px] pl-[2px] font-bold text-white">
            <button className="h-[23px] bg-[#72a2cf] px-[5px] whitespace-nowrap">Gerar Publicação de Entrados</button>
            <button className="h-[23px] bg-[#72a2cf] px-[6px] whitespace-nowrap">Gerar Documento</button>
            <Step n={2} className="top-0 -left-[22px]" />
            <Frame className="-top-px -left-[2px] h-[31px] w-[180px]" />
          </div>
          <div className="mr-px min-h-0 flex-1 border-t border-r border-white bg-white">
            <div className="flex h-[42px] bg-[#e5e5e3] pt-2 pl-[9px]">
              <button className="flex h-[26px] w-[100px] items-center justify-between border border-[#999] bg-[#f1f1f1] pr-2 pl-[2px] text-[15px] text-black">
                SubFluxo <SortMark />
              </button>
            </div>
            <ProcessTable />
          </div>
          <footer className="h-8 overflow-hidden text-black">
            <p className="h-5 leading-5 whitespace-pre">{'1 objeto selecionado  Existem 4 processos nesta fila'}</p>
            <div className="flex items-start pl-[3px] font-semibold text-[#555]">
              <span className="pt-[2px]">Partes: T</span>
              <span className="h-4 w-[174px] bg-linear-to-r from-[#c9c0b8] via-[#c2c2c2] via-15% to-[#cfcfcf]" />
            </div>
          </footer>
          <ReportDialog />
        </main>
      </div>
    </div>
  )
}
